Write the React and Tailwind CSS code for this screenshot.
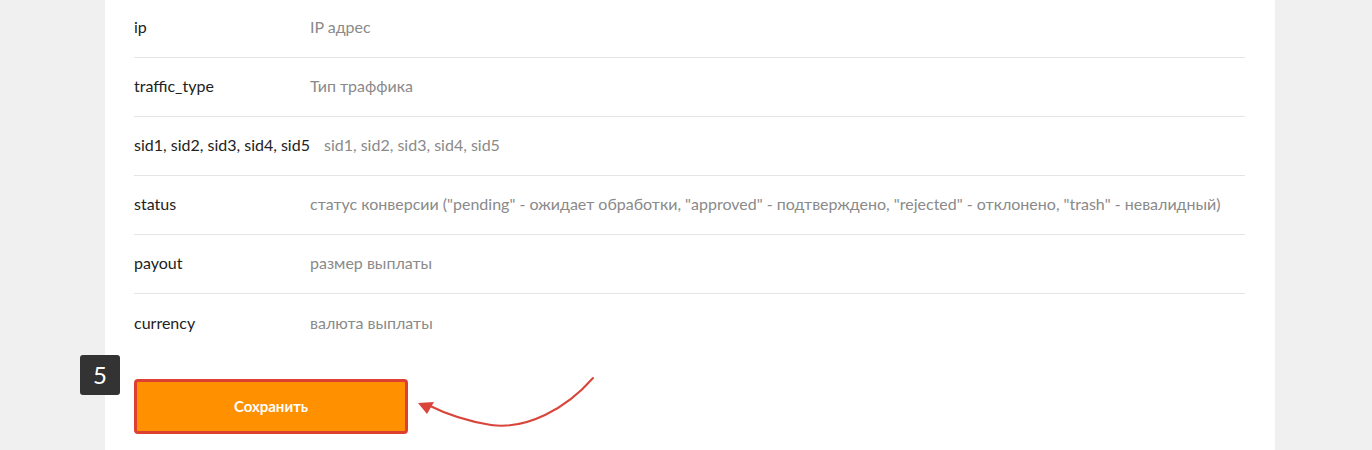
import React from "react";

const rows = [
  { key: "ip", desc: "IP адрес" },
  { key: "traffic_type", desc: "Тип траффика" },
  { key: "sid1, sid2, sid3, sid4, sid5", desc: "sid1, sid2, sid3, sid4, sid5" },
  {
    key: "status",
    desc: 'статус конверсии ("pending" - ожидает обработки, "approved" - подтверждено, "rejected" - отклонено, "trash" - невалидный)',
  },
  { key: "payout", desc: "размер выплаты" },
  { key: "currency", desc: "валюта выплаты" },
];

const App = () => {
  return (
    <div
      className="w-full h-[450px] bg-[#f0f0f0] overflow-hidden"
      style={{ fontFamily: "Lato, 'Noto Sans', sans-serif" }}
    >
      <div className="ml-[105px] w-[1170px] h-[470px] bg-white pl-[29px] pr-[30px]">
        <div className="flex flex-col -mt-px">
          {rows.map((row, i) => (
            <div
              key={row.key}
              className={`flex items-center h-[59px] pb-[2px] text-[16px] ${
                i < rows.length - 1 ? "border-b border-[#e5e5e5]" : ""
              }`}
            >
              <div className="min-w-[162px] mr-[14px] text-[#222] whitespace-nowrap">{row.key}</div>
              <div className="text-[#8a8a8a] whitespace-nowrap">{row.desc}</div>
            </div>
          ))}
        </div>

        <div className="relative mt-[26px]">
          <div className="absolute left-[-54px] top-[-24px] w-[40px] h-[40px] rounded-[3px] bg-[#333] text-white text-[24px] flex items-center justify-center">
            5
          </div>
          <div className="flex items-start">
            <button
              type="button"
              className="w-[274px] h-[55px] bg-[#ff9000] border-[3px] border-[#dd4030] rounded-[4px] text-white text-[15px] font-bold"
            >
              Сохранить
            </button>
            <svg width="190" height="60" viewBox="0 0 190 60" className="ml-[8px] mt-[-5px]">
              <path
                d="M177 4 C150 35 110 56 75 51 C50 47 30 40 12 31"
                fill="none"
                stroke="#d9453a"
                strokeWidth="2"
                strokeLinecap="round"
              />
              <path d="M2 29 L18 28 L11 40 Z" fill="#d9453a" />
            </svg>
          </div>
        </div>
      </div>
    </div>
  );
};

export default App;
